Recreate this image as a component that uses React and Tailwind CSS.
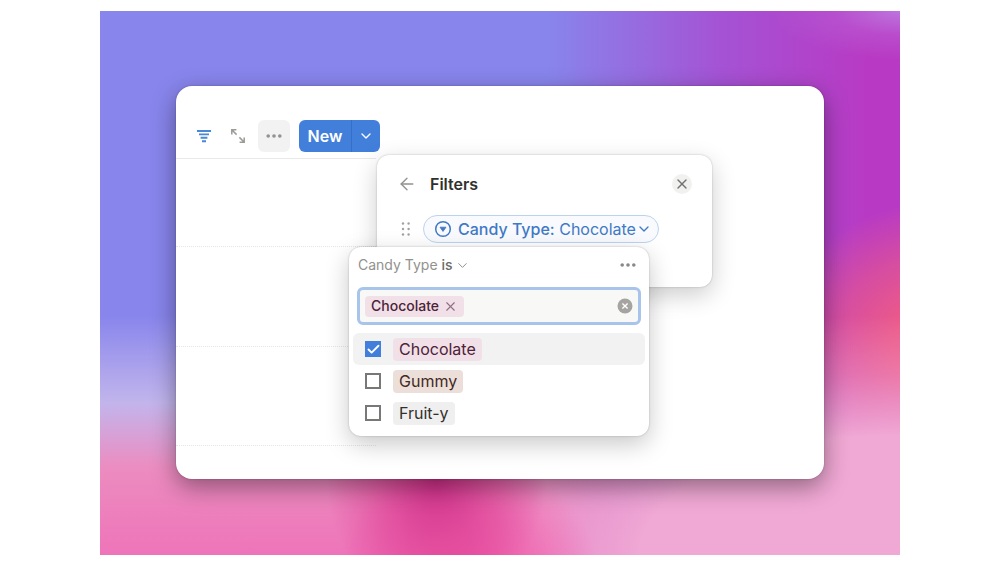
import React, { useState } from 'react';
import { ArrowLeft, Check, ChevronDown, X } from 'lucide-react';

const OPTIONS = [
  { name: 'Chocolate', tag: 'bg-[#f2e0e9] text-[#4c2337]' },
  { name: 'Gummy', tag: 'bg-[#ecdfda] text-[#442a1e]' },
  { name: 'Fruit-y', tag: 'bg-[#f0efef] text-[#32302c]' },
];

const FilterIcon = () => (
  <svg width="16" height="16" viewBox="0 0 16 16" fill="none" stroke="currentColor" strokeWidth="1.9">
    <path d="M1 3h14M3 6.4h10M4.6 9.8h6.8M6 13.2h4" />
  </svg>
);

const ExpandIcon = () => (
  <svg width="16" height="16" viewBox="0 0 16 16" fill="none" stroke="currentColor" strokeWidth="1.5">
    <path d="M1.8 6.4V1.8h4.6M2 2l4.6 4.6M14.2 9.6v4.6H9.6M14 14L9.4 9.4" />
  </svg>
);

const DotsIcon = () => (
  <svg width="18" height="18" viewBox="0 0 18 18" fill="currentColor">
    <circle cx="3.2" cy="9" r="1.8" />
    <circle cx="9" cy="9" r="1.8" />
    <circle cx="14.8" cy="9" r="1.8" />
  </svg>
);

const DragIcon = () => (
  <svg width="12" height="16" viewBox="0 0 12 16" fill="currentColor">
    {[2.5, 8, 13.5].map((y) => (
      <g key={y}>
        <circle cx="3" cy={y} r="1.2" />
        <circle cx="8.6" cy={y} r="1.2" />
      </g>
    ))}
  </svg>
);

const SelectIcon = () => (
  <svg width="18" height="18" viewBox="0 0 18 18" fill="none">
    <circle cx="9" cy="9" r="7.3" stroke="currentColor" strokeWidth="1.5" />
    <path d="M6 7.2h6L9 11.4z" fill="currentColor" stroke="currentColor" strokeWidth="0.8" strokeLinejoin="round" />
  </svg>
);

const ClearIcon = () => (
  <svg width="16" height="16" viewBox="0 0 16 16" fill="none">
    <circle cx="8" cy="8" r="7.5" fill="#a5a4a1" />
    <path d="M5.4 5.4l5.2 5.2M10.6 5.4l-5.2 5.2" stroke="#fff" strokeWidth="1.4" />
  </svg>
);

const Toolbar = () => (
  <div className="flex items-center pl-5">
    <button aria-label="Filter" className="flex size-4 items-center justify-center text-[#4a87d8]">
      <FilterIcon />
    </button>
    <button aria-label="Expand" className="ml-[18px] flex size-4 items-center justify-center text-[#9b9a97]">
      <ExpandIcon />
    </button>
    <button aria-label="More" className="ml-3 flex size-8 items-center justify-center rounded-md bg-[#f2f2f2] text-[#91918e]">
      <DotsIcon />
    </button>
    <div className="ml-[9px] flex h-8 overflow-hidden rounded-md bg-[#417fdb] text-white">
      <button className="w-[53px] border-r border-[#3470c8] text-base font-semibold">New</button>
      <button aria-label="New options" className="flex w-7 items-center justify-center">
        <ChevronDown size={16} strokeWidth={2} />
      </button>
    </div>
  </div>
);

const ValueMenu = ({ selected, onToggle, onClear }) => (
  <div className="absolute top-[92px] -left-7 w-[300px] rounded-xl bg-white pb-[7px] shadow-[0_0_2px_rgba(0,0,0,0.25),0_8px_24px_rgba(0,0,0,0.22)]">
    <div className="flex h-9 items-center justify-between pr-3 pl-[9px]">
      <button className="flex items-center gap-0.5 text-sm text-[#91918e]">
        <span>Candy Type <span className="font-medium text-[#6b6a67]">is</span></span>
        <ChevronDown size={15} strokeWidth={1.6} />
      </button>
      <button aria-label="Filter options" className="text-[#8a8986]"><DotsIcon /></button>
    </div>

    <div className="mx-2 mt-1 flex h-[38px] items-center rounded-md border-[3px] border-[#a9c4eb] bg-[#f8f8f7] px-[5px]">
      {selected.map((name) => (
        <span key={name} className="flex h-[21px] shrink-0 items-center gap-1 rounded-sm bg-[#f2e0e9] px-1.5 text-sm font-medium text-[#4c2337]">
          {name}
          <button aria-label={`Remove ${name}`} onClick={() => onToggle(name)} className="text-[#8d7080]">
            <X size={15} strokeWidth={1.8} />
          </button>
        </span>
      ))}
      <input aria-label="Search options" className="min-w-0 flex-1 bg-transparent px-2 text-sm outline-none" />
      <button aria-label="Clear all" onClick={onClear}><ClearIcon /></button>
    </div>

    <ul className="mt-2 px-1">
      {OPTIONS.map((option) => {
        const checked = selected.includes(option.name);
        return (
          <li key={option.name}>
            <label className={`flex h-8 items-center rounded-md pl-3 ${option.name === 'Chocolate' ? 'bg-[#f2f2f2]' : ''}`}>
              <span className="relative flex size-4 items-center justify-center">
                <input
                  type="checkbox"
                  checked={checked}
                  onChange={() => onToggle(option.name)}
                  className="size-4 appearance-none border-2 border-[#7a7876] bg-white checked:border-[#417fdb] checked:bg-[#417fdb]"
                />
                {checked && <Check size={15} strokeWidth={3} className="pointer-events-none absolute text-white" />}
              </span>
              <span className={`ml-3 flex h-[23px] items-center rounded px-1.5 text-base ${option.tag}`}>
                {option.name}
              </span>
            </label>
          </li>
        );
      })}
    </ul>
  </div>
);

const FiltersPanel = ({ children }) => (
  <div className="absolute top-[69px] left-[201px] h-[132px] w-[335px] rounded-xl bg-white pt-[17px] shadow-[0_0_2px_rgba(0,0,0,0.25),0_8px_24px_rgba(0,0,0,0.2)]">
    <div className="flex h-6 items-center px-5">
      <button aria-label="Back" className="text-[#91918e]"><ArrowLeft size={20} strokeWidth={1.6} /></button>
      <h2 className="ml-[13px] flex-1 text-base font-semibold text-[#32302c]">Filters</h2>
      <button aria-label="Close" className="flex size-5 items-center justify-center rounded-full bg-[#f1f1f0] text-[#73726e]">
        <X size={16} strokeWidth={2} />
      </button>
    </div>
    <div className="mt-[19px] flex items-center pl-[23px]">
      <span className="text-[#a3a29f]"><DragIcon /></span>
      <button className="ml-[11px] flex h-7 items-center rounded-full border border-[#bcd3f0] bg-[#f8fafd] pr-1.5 pl-2.5 text-base text-[#4079c6]">
        <SelectIcon />
        <span className="ml-1.5"><span className="font-medium">Candy Type:</span> Chocolate</span>
        <ChevronDown size={16} strokeWidth={2} />
      </button>
    </div>
    {children}
  </div>
);

const App = () => {
  const [selected, setSelected] = useState(['Chocolate']);

  const toggle = (name) =>
    setSelected((prev) => (prev.includes(name) ? prev.filter((n) => n !== name) : [...prev, name]));

  return (
    <div className="min-h-screen bg-white px-[10%] py-[11px] font-['Inter','Liberation_Sans',sans-serif]">
      <main className="bg-[radial-gradient(130px_48px_at_100%_0%,#bd74de,rgba(189,116,222,0.3)_50%,transparent),radial-gradient(110px_130px_at_42%_86%,#d0308a,rgba(216,51,139,0.5)_50%,transparent),radial-gradient(130px_120px_at_46%_104%,#ee56a6,rgba(238,86,166,0.5)_55%,transparent),radial-gradient(520px_240px_at_100%_100%,#f0a8d4_50%,rgba(240,168,212,0.4)_75%,transparent),radial-gradient(200px_150px_at_108%_62%,#ec5a88_35%,rgba(236,90,136,0.6)_65%,transparent),linear-gradient(90deg,transparent_56%,#a552d4_78%,#b83ac4_96%),linear-gradient(180deg,#8885ec_56%,#c2b5ec_72%,#ec8cc0_84%,#ee74b9)] px-[9.5%] pt-[75px] pb-[76px]">
        <section className="relative rounded-2xl bg-white pt-[34px] pb-[33px] shadow-[0_8px_24px_rgba(0,0,0,0.4),0_0_2px_rgba(0,0,0,0.25)]">
          <Toolbar />
          <div className="mt-1.5 w-[200px] border-t border-[#e9e9e7]">
            <div className="h-[88px] border-b border-dotted border-[#e6e6e4]" />
            <div className="h-[100px] border-b border-dotted border-[#e6e6e4]" />
            <div className="h-[99px] border-b border-dotted border-[#e6e6e4]" />
          </div>
          <FiltersPanel>
            <ValueMenu selected={selected} onToggle={toggle} onClear={() => setSelected([])} />
          </FiltersPanel>
        </section>
      </main>
    </div>
  );
};

export default App;
